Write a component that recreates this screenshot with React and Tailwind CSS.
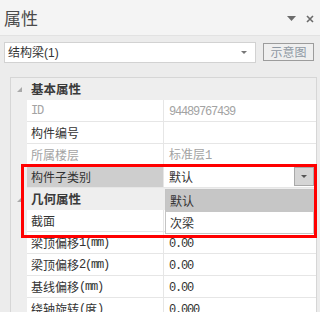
import React from "react";

const FONT = "font-['SimSun','Noto_Sans_CJK_SC',sans-serif]";

function Txt({ s }) {
  const parts = s.match(/[\x00-\x7f]+|[^\x00-\x7f]+/g) || [];
  return (
    <>
      {parts.map((p, i) =>
        /^[\x00-\x7f]+$/.test(p) ? (
          <span key={i} className="font-['Liberation_Mono',monospace] text-[12px] tracking-[-1.2px]">
            {p}
          </span>
        ) : (
          <span key={i}>{p}</span>
        )
      )}
    </>
  );
}

function Tri() {
  return (
    <svg width="5" height="5" viewBox="0 0 5 5" className="block">
      <polygon points="5,0 5,5 0,5" fill="#a9a9a9" />
    </svg>
  );
}

function Header({ label }) {
  return (
    <div className="flex h-[22px] items-center">
      <div className="flex w-[16px] justify-center pl-[1px]">
        <Tri />
      </div>
      <div className="pl-[4px] text-[12.5px] font-bold text-[#3a3a3a]">{label}</div>
    </div>
  );
}

function Row({ label, value, dim, selected, editor }) {
  return (
    <div className="flex h-[22px]">
      <div className="w-[16px]" />
      <div
        className={`flex w-[137px] items-center border-b border-r border-[#e6e6e6] pl-[4px] text-[12px] ${
          selected ? "bg-[#cecece]" : "bg-white"
        } ${dim ? "text-[#a3a3a3]" : "text-[#333]"}`}
      >
        <Txt s={label} />
      </div>
      <div
        className={`flex flex-1 items-center justify-between border-b border-[#e6e6e6] bg-white pl-[5px] text-[12px] ${
          dim ? "text-[#a3a3a3]" : "text-[#333]"
        }`}
      >
        <span>
          <Txt s={value} />
        </span>
        {editor && (
          <div className="mr-[2px] flex h-[19px] w-[20px] items-center justify-center border border-[#a9a9a9] bg-[#d5d5d5]">
            <svg width="6" height="3" viewBox="0 0 6 3">
              <polygon points="0,0 6,0 3,3" fill="#555" />
            </svg>
          </div>
        )}
      </div>
    </div>
  );
}

export default function App() {
  return (
    <div className={`relative h-[312px] w-[320px] overflow-hidden bg-[#ececec] ${FONT}`}>
      {/* title bar */}
      <div className="flex h-[36px] items-center justify-between border-b border-[#e2e2e2] bg-[#f4f4f4] pl-[4px] pr-[6px]">
        <span className="text-[17px] leading-none text-[#4a4a4a]">属性</span>
        <div className="flex items-center gap-[10px] pt-[2px]">
          <svg width="9" height="5" viewBox="0 0 9 5">
            <polygon points="0,0 9,0 4.5,5" fill="#6b6b6b" />
          </svg>
          <svg width="8" height="8" viewBox="0 0 8 8">
            <path d="M1 1 L7 7 M7 1 L1 7" stroke="#6b6b6b" strokeWidth="1.6" />
          </svg>
        </div>
      </div>

      {/* combo row */}
      <div className="mt-[6px] flex items-start pl-[4px]">
        <div className="flex h-[21px] w-[252px] items-center justify-between border border-[#d2d2d2] bg-white pl-[3px] pr-[8px] text-[12px] text-[#333]">
          <span>
            结构梁<span className="font-['Liberation_Sans',sans-serif] text-[12px]">(1)</span>
          </span>
          <svg width="6" height="3" viewBox="0 0 6 3">
            <polygon points="0,0 6,0 3,3" fill="#777" />
          </svg>
        </div>
        <div className="ml-[7px] mt-[1px] flex h-[18px] w-[51px] items-center justify-center border border-[#9c9c9c] bg-[#efefef] text-[12px] text-[#8e98a3]">
          示意图
        </div>
      </div>

      {/* property grid */}
      <div className="ml-[10px] mt-[14px] w-[307px] border border-[#d6d6d6] bg-[#eeeeee]">
        <Header label="基本属性" />
        <Row label="ID" value="94489767439" dim />
        <Row label="构件编号" value="" />
        <Row label="所属楼层" value="标准层1" dim />
        <Row label="构件子类别" value="默认" selected editor />
        <Header label="几何属性" />
        <Row label="截面" value="" />
        <Row label="梁顶偏移1(mm)" value="0.00" />
        <Row label="梁顶偏移2(mm)" value="0.00" />
        <Row label="基线偏移(mm)" value="0.00" />
        <Row label="绕轴旋转(度)" value="0.000" />
      </div>

      {/* open dropdown list */}
      <div className="absolute left-[165px] top-[189px] h-[45px] w-[149px] border border-[#c4c4c4] bg-white text-[12px] text-[#333]">
        <div className="flex h-[22px] items-center bg-[#c6c6c6] pl-[4px]">默认</div>
        <div className="flex h-[21px] items-center pl-[4px]">次梁</div>
      </div>

      {/* annotation */}
      <div className="pointer-events-none absolute left-[21px] top-[164px] h-[74px] w-[296px] border-[3px] border-[#ff0000]" />
    </div>
  );
}
